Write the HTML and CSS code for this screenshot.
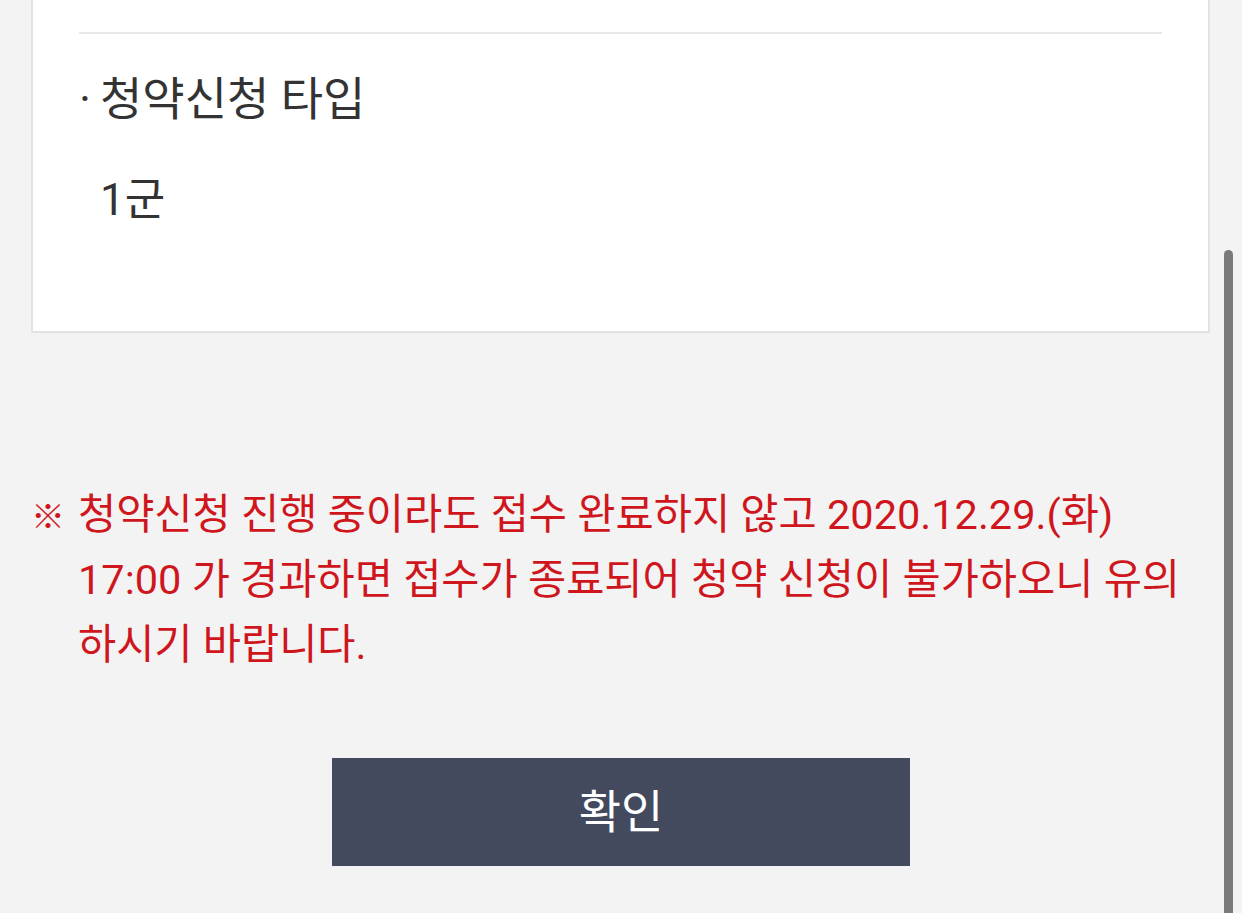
FILE: index.html
```html
<!DOCTYPE html>
<html lang="ko">
<head>
    <meta charset="UTF-8">
    <meta name="viewport" content="width=device-width, initial-scale=1.0">
    <title>청약신청</title>
    <link rel="stylesheet" href="styles.css">
</head>
<body>

    <div class="card">
        <div class="divider"></div>
        <div class="field-title"><span class="bullet">·</span>청약신청 타입</div>
        <div class="field-value">1군</div>
    </div>

    <div class="notice">
        <span class="notice-mark">※</span>
        <p class="notice-text">청약신청 진행 중이라도 접수 완료하지 않고 2020.12.29.(화)<br>17:00 가 경과하면 접수가 종료되어 청약 신청이 불가하오니 유의<br>하시기 바랍니다.</p>
    </div>

    <div class="actions">
        <button class="btn-confirm">확인</button>
    </div>

    <div class="scrollbar"></div>

</body>
</html>
```

FILE: styles.css
```css
body {
    font-family: Roboto, "Noto Sans CJK KR", sans-serif;
    background-color: #f3f3f3;
    margin: 0;
    padding: 0;
    color: #333;
}

.card {
    margin: 0 32px 0 31px;
    padding: 32px 46px 101px;
    background-color: #fff;
    border: 2px solid #e2e2e2;
    border-top: none;
}

.divider {
    border-top: 2px solid #e8e8e8;
}

.field-title {
    margin-top: 35px;
    font-size: 46px;
    line-height: 60px;
    color: #333;
}

.bullet {
    display: inline-block;
    width: 21px;
}

.field-value {
    margin-top: 41px;
    padding-left: 21px;
    font-size: 44px;
    line-height: 60px;
    color: #333;
}

.notice {
    display: flex;
    margin: 149px 40px 0 31px;
    color: #cf161d;
    font-size: 41.5px;
    line-height: 65px;
}

.notice-mark {
    width: 47px;
    flex-shrink: 0;
    font-family: "Noto Sans CJK KR", sans-serif;
    font-size: 34px;
    font-weight: bold;
}

.notice-text {
    margin: 0;
    white-space: nowrap;
}

.actions {
    display: flex;
    justify-content: center;
    margin-top: 81px;
}

.btn-confirm {
    width: 578px;
    height: 108px;
    padding: 0 0 8px;
    border: none;
    background-color: #434a5e;
    color: #fff;
    font-family: inherit;
    font-size: 46px;
    cursor: pointer;
}

.scrollbar {
    position: fixed;
    top: 250px;
    right: 9px;
    bottom: 0;
    width: 9px;
    border-radius: 5px 5px 0 0;
    background-color: #7a7a7a;
}
```
